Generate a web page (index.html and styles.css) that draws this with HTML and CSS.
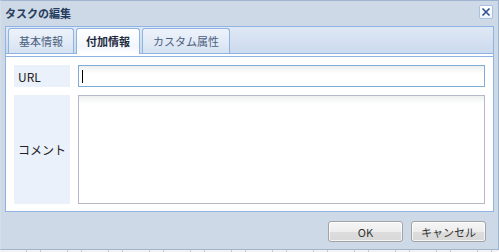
FILE: index.html
```html
<!DOCTYPE html>
<html lang="ja">
<head>
<meta charset="utf-8">
<title>タスクの編集</title>
<link rel="stylesheet" href="styles.css">
</head>
<body>
<div class="window">
  <div class="header">
    <span class="title">タスクの編集</span>
    <span class="close" aria-label="閉じる">
      <svg width="10" height="10" viewBox="0 0 10 10"><path d="M1.5 1.5 L8.5 8.5 M8.5 1.5 L1.5 8.5" stroke="#2d4f8f" stroke-width="1.6" fill="none"/></svg>
    </span>
  </div>
  <div class="tabpanel">
    <div class="tabstrip">
      <div class="tab">基本情報</div>
      <div class="tab active">付加情報</div>
      <div class="tab">カスタム属性</div>
    </div>
    <div class="spacer"></div>
    <div class="tabbody">
      <div class="row">
        <label class="lbl">URL</label>
        <div class="field input"><span class="caret"></span></div>
      </div>
      <div class="row tall">
        <label class="lbl">コメント</label>
        <div class="field area"></div>
      </div>
    </div>
  </div>
  <div class="footer">
    <button class="btn">OK</button>
    <button class="btn">キャンセル</button>
  </div>
</div>
<div class="behind"></div>
</body>
</html>
```

FILE: styles.css
```css
* { box-sizing: border-box; }
html, body { margin: 0; padding: 0; }
body {
  background: #f4f4f4;
  font-family: "Noto Sans CJK JP", "Noto Sans", sans-serif;
  width: 499px;
  height: 252px;
  overflow: hidden;
}
.window {
  width: 499px;
  height: 250px;
  border: 1px solid #9fb4cf;
  border-left-color: #d6dde6;
  background: #cdd9e6;
  display: flex;
  flex-direction: column;
}
.header {
  height: 25px;
  display: flex;
  justify-content: space-between;
  align-items: flex-start;
  padding: 0 5px 0 4px;
}
.title {
  font-size: 11px;
  font-weight: bold;
  color: #263c5e;
  line-height: 25px;
}
.close {
  margin-top: 4px;
  width: 14px;
  height: 14px;
  border: 1px solid #a9c0e0;
  border-radius: 2px;
  background: linear-gradient(#ffffff, #eef3fa);
  display: flex;
  align-items: center;
  justify-content: center;
}
.close svg { display: block; }
.tabpanel {
  margin: 0 4px;
  display: flex;
  flex-direction: column;
}
.tabstrip {
  height: 28px;
  border: 1px solid #8fb3e2;
  background: linear-gradient(#dfe8f5, #ccdaee);
  display: flex;
  align-items: flex-end;
  gap: 2px;
  padding: 0 0 0 2px;
}
.tab {
  height: 25px;
  padding: 0 10px;
  border: 1px solid #8fb3e2;
  border-bottom: none;
  border-radius: 3px 3px 0 0;
  background: linear-gradient(#eef3fa, #d6e2f2);
  font-size: 11px;
  line-height: 24px;
  color: #4b607e;
}
.tab.active {
  height: 26px;
  margin-bottom: -1px;
  background: linear-gradient(#ffffff, #f2f6fc 70%, #ffffff);
  color: #1d2b40;
  font-weight: bold;
  padding: 0 9px;
}
.spacer {
  height: 2px;
  background: #ffffff;
  border-left: 1px solid #8fb3e2;
  border-right: 1px solid #8fb3e2;
}
.tabbody {
  height: 156px;
  border: 1px solid #8fb3e2;
  background: #ffffff;
  padding: 8px 8px 7px 8px;
  display: flex;
  flex-direction: column;
  gap: 8px;
}
.row {
  display: flex;
  gap: 8px;
  height: 22px;
}
.row.tall { height: 109px; }
.lbl {
  width: 56px;
  flex: none;
  background: #eaf1fb;
  font-size: 12px;
  color: #222;
  padding-left: 4px;
  display: flex;
  align-items: center;
  white-space: nowrap;
  overflow: hidden;
}
.field {
  flex: 1;
  background: linear-gradient(#eef0f0, #ffffff 8px);
}
.field.input {
  border: 1px solid #7eadd9;
  display: flex;
  align-items: center;
  padding-left: 3px;
}
.caret {
  width: 1px;
  height: 13px;
  background: #000;
}
.field.area {
  border: 1px solid #b5b8c8;
}
.footer {
  flex: 1;
  display: flex;
  justify-content: flex-end;
  align-items: flex-start;
  gap: 8px;
  padding: 9px 12px 0 0;
}
.btn {
  width: 75px;
  height: 21px;
  border: 1px solid #a3a3a3;
  border-radius: 3px;
  background: linear-gradient(#f6f6f6, #ededed 50%, #dddddd 55%, #d8d8d8);
  box-shadow: inset 0 0 0 1px rgba(255,255,255,0.7);
  font-family: "Noto Sans CJK JP", "Noto Sans", sans-serif;
  font-size: 11px;
  color: #333;
  padding: 0;
  line-height: 18px;
}
.behind {
  height: 2px;
  background: repeating-linear-gradient(to right, #f4f4f4 0 26px, #c9c9c9 26px 27px, #f4f4f4 27px 40px, #c9c9c9 40px 41px);
}
```
